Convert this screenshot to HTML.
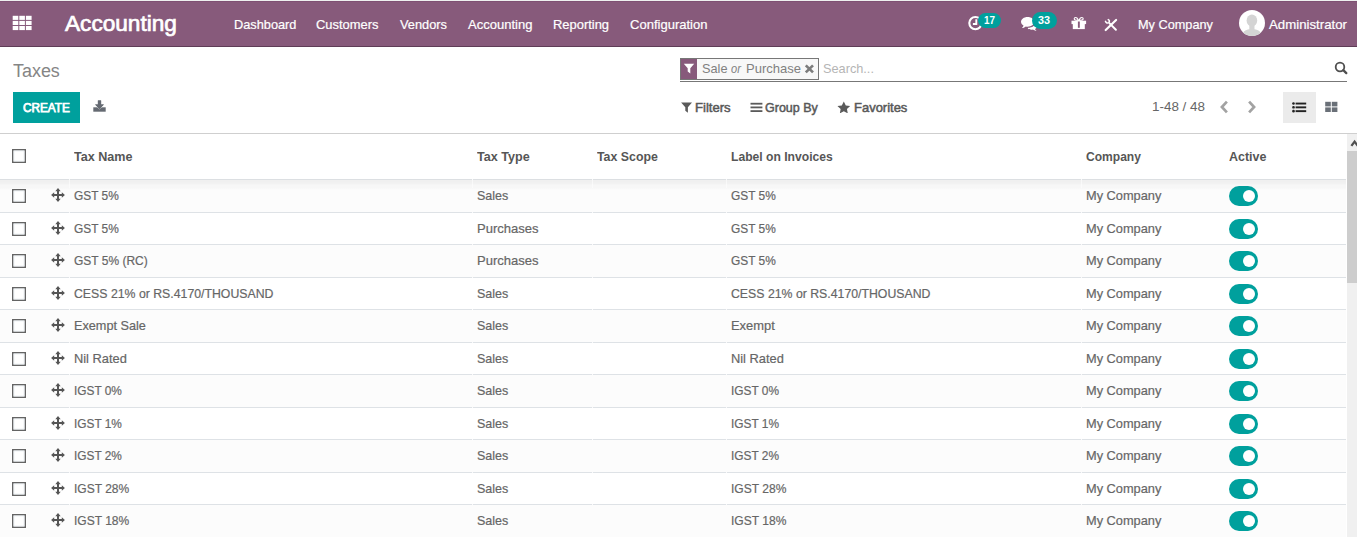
<!DOCTYPE html>
<html lang="en">
<head>
<meta charset="utf-8">
<title>Taxes - Odoo</title>
<style>
html,body{margin:0;padding:0;}
body{width:1357px;height:537px;overflow:hidden;background:#fff;position:relative;
  font-family:"Liberation Sans",sans-serif;font-size:13px;color:#666;}
.abs,.t,.row,.cb,.hd,.tg,svg.ic{position:absolute;}
.t{white-space:nowrap;display:block;transform-origin:0 0;}
/* navbar */
#topline{left:0;top:0;width:1357px;height:1px;background:#eef0ef;}
#nav{left:0;top:1px;width:1357px;height:45px;background:#875a7b;border-bottom:1px solid #5f3d57;}
#nav:before{content:"";position:absolute;left:0;top:0;width:100%;height:1px;background:#7f5073;}
.badge{background:#00a09d;border-radius:10px;}
#avatar{left:1239px;top:10px;width:26px;height:26px;border-radius:50%;background:radial-gradient(circle at 50% 45%,#fff 60%,#f1f1f1 100%);overflow:hidden;}
/* control panel */
#cpline{left:0;top:133px;width:1357px;height:1px;background:#cfcfcf;}
#create{left:13px;top:92px;width:67px;height:31px;background:#00a09d;}
#facet{left:680px;top:58px;width:137px;height:20px;border:1px solid #777;background:#f8f8f8;}
#facet i{position:absolute;left:0;top:0;width:16px;height:20px;background:#875a7b;display:block;}
#sline{left:680px;top:81px;width:667px;height:1px;background:#777;}
#listbtn{left:1283px;top:92px;width:33px;height:31px;background:#ebebeb;}
/* table */
#thead{left:0;top:134px;width:1346px;height:45px;background:#fff;}
#theadline{left:0;top:179px;width:1346px;height:1px;background:#dcdfe2;}
.row{left:0;width:1346px;box-sizing:border-box;border-bottom:1px solid #dee2e6;}
.row.r0{background:#fcfcfc;}
.row.r1{background:#fff;}
#shadow{left:0;top:180px;width:1346px;height:10px;background:linear-gradient(to bottom,rgba(0,0,0,.05) 0,rgba(0,0,0,.04) 4px,rgba(0,0,0,.02) 5px,rgba(0,0,0,.018) 8px,rgba(0,0,0,0) 10px);}
.cb{left:12px;}
.hd{left:51.4px;}
.tg{left:1229px;width:29px;height:20px;border-radius:10px;background:#00a09d;}
.tg i{position:absolute;left:14px;top:4px;width:12px;height:12px;border-radius:50%;background:#fff;}
.seam{width:1px;height:1px;background:rgba(255,255,255,.8);}
/* scrollbar */
#sb{left:1347px;top:134px;width:10px;height:403px;background:#f0f0f0;}
#sbthumb{left:1347px;top:151px;width:10px;height:132px;background:#cdcdcd;}
</style>
</head>
<body>
<div id="topline" class="abs"></div>
<div id="nav" class="abs"></div>

<!-- apps icon -->
<svg class="ic" style="left:12px;top:15px" width="20" height="16" viewBox="0 0 20 16" fill="#fff">
  <rect x="0.7" y="0.8" width="5.6" height="4.1"/><rect x="7.3" y="0.8" width="5.6" height="4.1"/><rect x="13.9" y="0.8" width="5.7" height="4.1"/>
  <rect x="0.7" y="5.9" width="5.6" height="4.1"/><rect x="7.3" y="5.9" width="5.6" height="4.1"/><rect x="13.9" y="5.9" width="5.7" height="4.1"/>
  <rect x="0.7" y="11" width="5.6" height="4.1"/><rect x="7.3" y="11" width="5.6" height="4.1"/><rect x="13.9" y="11" width="5.7" height="4.1"/>
</svg>

<!-- clock icon -->
<svg class="ic" style="left:967px;top:15px" width="17" height="17" viewBox="0 0 17 17" fill="none" stroke="#fff">
  <circle cx="8.4" cy="8.1" r="6.1" stroke-width="2.1"/>
  <path d="M9.3 4.3 V9 H5.9" stroke-width="1.9"/>
</svg>
<div class="abs badge" style="left:978px;top:13px;width:23px;height:15px;"></div>

<!-- comments icon -->
<svg class="ic" style="left:1020px;top:16px" width="20" height="16" viewBox="0 0 20 16" fill="#fff">
  <path d="M7.6 0.9 C11.4 0.9 14.2 3.1 14.2 5.8 C14.2 8.5 11.4 10.7 7.6 10.7 C7 10.7 6.4 10.6 5.8 10.5 C4.9 11.4 3.6 11.9 2 12.1 C2.8 11.4 3.3 10.5 3.5 9.6 C2 8.7 1 7.3 1 5.8 C1 3.1 3.8 0.9 7.6 0.9 Z"/>
  <path d="M15.4 7.2 C16.4 7.9 17 8.9 17 10 C17 11.2 16.2 12.3 15 13 C15.2 13.7 15.7 14.3 16.6 14.9 C15 14.8 13.8 14.3 13 13.6 C12.5 13.7 12 13.8 11.4 13.8 C9.9 13.8 8.6 13.4 7.7 12.6 L8.2 11.7 C12.2 11.6 15.4 9.6 15.4 7.2 Z"/>
</svg>
<div class="abs badge" style="left:1032px;top:12px;width:25px;height:17px;"></div>

<!-- gift icon -->
<svg class="ic" style="left:1071px;top:16px" width="16" height="14" viewBox="0 0 16 14">
  <path d="M4.6 1.5 C5.8 1.5 6.9 2.9 7.4 4.5 C5.8 4.5 3.2 4.3 3.2 2.8 C3.2 2 3.8 1.5 4.6 1.5 Z M10.8 1.5 C9.6 1.5 8.5 2.9 8 4.5 C9.6 4.5 12.2 4.3 12.2 2.8 C12.2 2 11.6 1.5 10.8 1.5 Z" fill="none" stroke="#fff" stroke-width="1.1"/>
  <rect x="0.5" y="4.7" width="14.6" height="3.4" fill="#fff"/>
  <rect x="1.8" y="8" width="12" height="5.1" fill="#fff"/>
  <rect x="6.9" y="5.5" width="1.9" height="6.3" fill="#875a7b"/>
</svg>

<!-- tools icon -->
<svg class="ic" style="left:1104px;top:18px" width="14" height="14" viewBox="0 0 14 14" fill="none" stroke="#fff" stroke-linecap="round">
  <path d="M1.7 12 L12.1 2" stroke-width="2.2"/>
  <path d="M5.6 5.4 L11.9 11.8" stroke-width="2"/>
  <path d="M1.5 3.4 C1.9 4.9 3.6 5.5 4.8 4.5 C5.7 3.6 5.5 2.2 4.3 1.6" stroke-width="1.6"/>
</svg>

<!-- avatar -->
<div id="avatar" class="abs">
  <svg width="26" height="26" viewBox="0 0 26 26" fill="#d4d4d4"><ellipse cx="12.9" cy="10.6" rx="5.3" ry="6"/><path d="M3.2 26 C3.2 21.6 6.4 20 10.3 19.2 L10.3 14 H15.5 L15.5 19.2 C19.4 20 22.6 21.6 22.6 26 Z"/></svg>
</div>

<!-- control panel -->
<div id="create" class="abs"></div>
<!-- download icon -->
<svg class="ic" style="left:93px;top:100px" width="13" height="12" viewBox="0 0 13 12" fill="#656a72">
  <path d="M0.3 7.3 H12.7 V11.7 H0.3 Z"/>
  <path d="M4.9 0.6 H8.1 V4.5 H10.9 L6.5 8.9 L2.1 4.5 H4.9 Z" stroke="#fff" stroke-width="1" paint-order="stroke"/>
  <path d="M4.9 0.6 H8.1 V4.5 H10.9 L6.5 8.9 L2.1 4.5 H4.9 Z"/>
</svg>
<div id="facet" class="abs"><i></i></div>
<!-- facet filter icon -->
<svg class="ic" style="left:683px;top:63px" width="12" height="12" viewBox="0 0 12 12" fill="#fff">
  <path d="M0.8 0.8 H11.2 L7.3 5.3 V10.4 L4.7 8.6 V5.3 Z"/>
</svg>
<!-- facet close -->
<svg class="ic" style="left:804px;top:64px" width="11" height="10" viewBox="0 0 11 10" fill="none" stroke="#7c7c7c" stroke-width="2.7">
  <path d="M1.8 1.4 L9 8.4 M9 1.4 L1.8 8.4"/>
</svg>
<div id="sline" class="abs"></div>
<!-- search icon -->
<svg class="ic" style="left:1334px;top:61px" width="14" height="14" viewBox="0 0 14 14" fill="none" stroke="#4f4f4f" stroke-width="1.8">
  <circle cx="6" cy="6" r="4.3"/>
  <path d="M9.3 9.2 L12.3 12.1" stroke-width="2.3" stroke-linecap="round"/>
</svg>
<!-- filters icon -->
<svg class="ic" style="left:681px;top:102px" width="12" height="11" viewBox="0 0 12 11" fill="#5a5a5a">
  <path d="M0.1 0.6 H11 L6.9 5.2 V10.7 L4.3 8.7 V5.2 Z"/>
</svg>
<!-- group by icon -->
<svg class="ic" style="left:750px;top:102px" width="13" height="11" viewBox="0 0 13 11" fill="#5a5a5a">
  <rect x="0.5" y="0.8" width="11.9" height="1.8"/><rect x="0.5" y="4.5" width="11.9" height="1.8"/><rect x="0.5" y="8.2" width="11.9" height="1.8"/>
</svg>
<!-- star icon -->
<svg class="ic" style="left:837.4px;top:100.6px" width="13.6" height="12.6" viewBox="0 0 13 12" fill="#5a5a5a">
  <path d="M6.5 0.4 L8.4 4.2 L12.6 4.8 L9.5 7.7 L10.3 11.8 L6.5 9.8 L2.7 11.8 L3.5 7.7 L0.4 4.8 L4.6 4.2 Z"/>
</svg>
<!-- pager chevrons -->
<svg class="ic" style="left:1219px;top:100px" width="11" height="14" viewBox="0 0 11 14" fill="none" stroke="#a2a2a2" stroke-width="2.7">
  <path d="M7.9 1.6 L2.9 7 L7.9 12.4"/>
</svg>
<svg class="ic" style="left:1246px;top:100px" width="11" height="14" viewBox="0 0 11 14" fill="none" stroke="#a2a2a2" stroke-width="2.7">
  <path d="M3.1 1.6 L8.1 7 L3.1 12.4"/>
</svg>
<div id="listbtn" class="abs"></div>
<!-- list icon -->
<svg class="ic" style="left:1292px;top:102px" width="15" height="11" viewBox="0 0 15 11" fill="#222">
  <rect x="0.2" y="0.2" width="2.6" height="2.6" rx="1.2"/><rect x="0.2" y="4" width="2.6" height="2.6" rx="1.2"/><rect x="0.2" y="7.8" width="2.6" height="2.6" rx="1.2"/>
  <rect x="3.6" y="0.6" width="10.6" height="1.9"/><rect x="3.6" y="4.4" width="10.6" height="1.9"/><rect x="3.6" y="8.2" width="10.6" height="1.9"/>
</svg>
<!-- kanban icon -->
<svg class="ic" style="left:1325px;top:101px" width="13" height="12" viewBox="0 0 13 12" fill="#6a7078">
  <rect x="0.2" y="0.8" width="5.6" height="4.6"/><rect x="6.8" y="0.8" width="5.6" height="4.6"/>
  <rect x="0.2" y="6.4" width="5.6" height="4.6"/><rect x="6.8" y="6.4" width="5.6" height="4.6"/>
</svg>
<div id="cpline" class="abs"></div>

<!-- table -->
<div id="thead" class="abs"></div>
<div id="theadline" class="abs"></div>
<div class="row r0" style="top:180px;height:33px"></div>
<svg class="cb" style="top:189px" width="14" height="14" viewBox="0 0 14 14" overflow="visible"><rect x="-0.5" y="-0.5" width="15" height="15" fill="#fff"/><rect x="0.75" y="0.75" width="12.5" height="12.5" fill="#fff" stroke="#646464" stroke-width="1.5"/><rect x="1.9" y="1.9" width="10.2" height="10.2" fill="none" stroke="#e4e9ee" stroke-width="0.8"/></svg>
<svg class="hd" style="top:188.1px" width="14" height="14" viewBox="0 0 14 14"><g fill="#555"><rect x="2.6" y="6" width="8.8" height="2"/><rect x="6" y="2.6" width="2" height="8.8"/><path d="M7 0.1 L9.7 3.2 H4.3 Z M7 13.9 L9.7 10.8 H4.3 Z M0.1 7 L3.2 4.3 V9.7 Z M13.9 7 L10.8 4.3 V9.7 Z"/></g></svg>
<div class="tg" style="top:186px"><i></i></div>
<div class="row r1" style="top:213px;height:32px"></div>
<svg class="cb" style="top:222px" width="14" height="14" viewBox="0 0 14 14" overflow="visible"><rect x="-0.5" y="-0.5" width="15" height="15" fill="#fff"/><rect x="0.75" y="0.75" width="12.5" height="12.5" fill="#fff" stroke="#646464" stroke-width="1.5"/><rect x="1.9" y="1.9" width="10.2" height="10.2" fill="none" stroke="#e4e9ee" stroke-width="0.8"/></svg>
<svg class="hd" style="top:221.1px" width="14" height="14" viewBox="0 0 14 14"><g fill="#555"><rect x="2.6" y="6" width="8.8" height="2"/><rect x="6" y="2.6" width="2" height="8.8"/><path d="M7 0.1 L9.7 3.2 H4.3 Z M7 13.9 L9.7 10.8 H4.3 Z M0.1 7 L3.2 4.3 V9.7 Z M13.9 7 L10.8 4.3 V9.7 Z"/></g></svg>
<div class="tg" style="top:219px"><i></i></div>
<div class="row r0" style="top:245px;height:33px"></div>
<svg class="cb" style="top:254px" width="14" height="14" viewBox="0 0 14 14" overflow="visible"><rect x="-0.5" y="-0.5" width="15" height="15" fill="#fff"/><rect x="0.75" y="0.75" width="12.5" height="12.5" fill="#fff" stroke="#646464" stroke-width="1.5"/><rect x="1.9" y="1.9" width="10.2" height="10.2" fill="none" stroke="#e4e9ee" stroke-width="0.8"/></svg>
<svg class="hd" style="top:253.1px" width="14" height="14" viewBox="0 0 14 14"><g fill="#555"><rect x="2.6" y="6" width="8.8" height="2"/><rect x="6" y="2.6" width="2" height="8.8"/><path d="M7 0.1 L9.7 3.2 H4.3 Z M7 13.9 L9.7 10.8 H4.3 Z M0.1 7 L3.2 4.3 V9.7 Z M13.9 7 L10.8 4.3 V9.7 Z"/></g></svg>
<div class="tg" style="top:251px"><i></i></div>
<div class="row r1" style="top:278px;height:32px"></div>
<svg class="cb" style="top:287px" width="14" height="14" viewBox="0 0 14 14" overflow="visible"><rect x="-0.5" y="-0.5" width="15" height="15" fill="#fff"/><rect x="0.75" y="0.75" width="12.5" height="12.5" fill="#fff" stroke="#646464" stroke-width="1.5"/><rect x="1.9" y="1.9" width="10.2" height="10.2" fill="none" stroke="#e4e9ee" stroke-width="0.8"/></svg>
<svg class="hd" style="top:286.1px" width="14" height="14" viewBox="0 0 14 14"><g fill="#555"><rect x="2.6" y="6" width="8.8" height="2"/><rect x="6" y="2.6" width="2" height="8.8"/><path d="M7 0.1 L9.7 3.2 H4.3 Z M7 13.9 L9.7 10.8 H4.3 Z M0.1 7 L3.2 4.3 V9.7 Z M13.9 7 L10.8 4.3 V9.7 Z"/></g></svg>
<div class="tg" style="top:284px"><i></i></div>
<div class="row r0" style="top:310px;height:33px"></div>
<svg class="cb" style="top:319px" width="14" height="14" viewBox="0 0 14 14" overflow="visible"><rect x="-0.5" y="-0.5" width="15" height="15" fill="#fff"/><rect x="0.75" y="0.75" width="12.5" height="12.5" fill="#fff" stroke="#646464" stroke-width="1.5"/><rect x="1.9" y="1.9" width="10.2" height="10.2" fill="none" stroke="#e4e9ee" stroke-width="0.8"/></svg>
<svg class="hd" style="top:318.1px" width="14" height="14" viewBox="0 0 14 14"><g fill="#555"><rect x="2.6" y="6" width="8.8" height="2"/><rect x="6" y="2.6" width="2" height="8.8"/><path d="M7 0.1 L9.7 3.2 H4.3 Z M7 13.9 L9.7 10.8 H4.3 Z M0.1 7 L3.2 4.3 V9.7 Z M13.9 7 L10.8 4.3 V9.7 Z"/></g></svg>
<div class="tg" style="top:316px"><i></i></div>
<div class="row r1" style="top:343px;height:32px"></div>
<svg class="cb" style="top:352px" width="14" height="14" viewBox="0 0 14 14" overflow="visible"><rect x="-0.5" y="-0.5" width="15" height="15" fill="#fff"/><rect x="0.75" y="0.75" width="12.5" height="12.5" fill="#fff" stroke="#646464" stroke-width="1.5"/><rect x="1.9" y="1.9" width="10.2" height="10.2" fill="none" stroke="#e4e9ee" stroke-width="0.8"/></svg>
<svg class="hd" style="top:351.1px" width="14" height="14" viewBox="0 0 14 14"><g fill="#555"><rect x="2.6" y="6" width="8.8" height="2"/><rect x="6" y="2.6" width="2" height="8.8"/><path d="M7 0.1 L9.7 3.2 H4.3 Z M7 13.9 L9.7 10.8 H4.3 Z M0.1 7 L3.2 4.3 V9.7 Z M13.9 7 L10.8 4.3 V9.7 Z"/></g></svg>
<div class="tg" style="top:349px"><i></i></div>
<div class="row r0" style="top:375px;height:33px"></div>
<svg class="cb" style="top:384px" width="14" height="14" viewBox="0 0 14 14" overflow="visible"><rect x="-0.5" y="-0.5" width="15" height="15" fill="#fff"/><rect x="0.75" y="0.75" width="12.5" height="12.5" fill="#fff" stroke="#646464" stroke-width="1.5"/><rect x="1.9" y="1.9" width="10.2" height="10.2" fill="none" stroke="#e4e9ee" stroke-width="0.8"/></svg>
<svg class="hd" style="top:383.1px" width="14" height="14" viewBox="0 0 14 14"><g fill="#555"><rect x="2.6" y="6" width="8.8" height="2"/><rect x="6" y="2.6" width="2" height="8.8"/><path d="M7 0.1 L9.7 3.2 H4.3 Z M7 13.9 L9.7 10.8 H4.3 Z M0.1 7 L3.2 4.3 V9.7 Z M13.9 7 L10.8 4.3 V9.7 Z"/></g></svg>
<div class="tg" style="top:381px"><i></i></div>
<div class="row r1" style="top:408px;height:32px"></div>
<svg class="cb" style="top:417px" width="14" height="14" viewBox="0 0 14 14" overflow="visible"><rect x="-0.5" y="-0.5" width="15" height="15" fill="#fff"/><rect x="0.75" y="0.75" width="12.5" height="12.5" fill="#fff" stroke="#646464" stroke-width="1.5"/><rect x="1.9" y="1.9" width="10.2" height="10.2" fill="none" stroke="#e4e9ee" stroke-width="0.8"/></svg>
<svg class="hd" style="top:416.1px" width="14" height="14" viewBox="0 0 14 14"><g fill="#555"><rect x="2.6" y="6" width="8.8" height="2"/><rect x="6" y="2.6" width="2" height="8.8"/><path d="M7 0.1 L9.7 3.2 H4.3 Z M7 13.9 L9.7 10.8 H4.3 Z M0.1 7 L3.2 4.3 V9.7 Z M13.9 7 L10.8 4.3 V9.7 Z"/></g></svg>
<div class="tg" style="top:414px"><i></i></div>
<div class="row r0" style="top:440px;height:33px"></div>
<svg class="cb" style="top:449px" width="14" height="14" viewBox="0 0 14 14" overflow="visible"><rect x="-0.5" y="-0.5" width="15" height="15" fill="#fff"/><rect x="0.75" y="0.75" width="12.5" height="12.5" fill="#fff" stroke="#646464" stroke-width="1.5"/><rect x="1.9" y="1.9" width="10.2" height="10.2" fill="none" stroke="#e4e9ee" stroke-width="0.8"/></svg>
<svg class="hd" style="top:448.1px" width="14" height="14" viewBox="0 0 14 14"><g fill="#555"><rect x="2.6" y="6" width="8.8" height="2"/><rect x="6" y="2.6" width="2" height="8.8"/><path d="M7 0.1 L9.7 3.2 H4.3 Z M7 13.9 L9.7 10.8 H4.3 Z M0.1 7 L3.2 4.3 V9.7 Z M13.9 7 L10.8 4.3 V9.7 Z"/></g></svg>
<div class="tg" style="top:446px"><i></i></div>
<div class="row r1" style="top:473px;height:32px"></div>
<svg class="cb" style="top:482px" width="14" height="14" viewBox="0 0 14 14" overflow="visible"><rect x="-0.5" y="-0.5" width="15" height="15" fill="#fff"/><rect x="0.75" y="0.75" width="12.5" height="12.5" fill="#fff" stroke="#646464" stroke-width="1.5"/><rect x="1.9" y="1.9" width="10.2" height="10.2" fill="none" stroke="#e4e9ee" stroke-width="0.8"/></svg>
<svg class="hd" style="top:481.1px" width="14" height="14" viewBox="0 0 14 14"><g fill="#555"><rect x="2.6" y="6" width="8.8" height="2"/><rect x="6" y="2.6" width="2" height="8.8"/><path d="M7 0.1 L9.7 3.2 H4.3 Z M7 13.9 L9.7 10.8 H4.3 Z M0.1 7 L3.2 4.3 V9.7 Z M13.9 7 L10.8 4.3 V9.7 Z"/></g></svg>
<div class="tg" style="top:479px"><i></i></div>
<div class="row r0" style="top:505px;height:33px"></div>
<svg class="cb" style="top:514px" width="14" height="14" viewBox="0 0 14 14" overflow="visible"><rect x="-0.5" y="-0.5" width="15" height="15" fill="#fff"/><rect x="0.75" y="0.75" width="12.5" height="12.5" fill="#fff" stroke="#646464" stroke-width="1.5"/><rect x="1.9" y="1.9" width="10.2" height="10.2" fill="none" stroke="#e4e9ee" stroke-width="0.8"/></svg>
<svg class="hd" style="top:513.1px" width="14" height="14" viewBox="0 0 14 14"><g fill="#555"><rect x="2.6" y="6" width="8.8" height="2"/><rect x="6" y="2.6" width="2" height="8.8"/><path d="M7 0.1 L9.7 3.2 H4.3 Z M7 13.9 L9.7 10.8 H4.3 Z M0.1 7 L3.2 4.3 V9.7 Z M13.9 7 L10.8 4.3 V9.7 Z"/></g></svg>
<div class="tg" style="top:511px"><i></i></div>
<div id="shadow" class="abs"></div>
<svg class="cb" style="top:149px" width="14" height="14" viewBox="0 0 14 14" overflow="visible"><rect x="-0.5" y="-0.5" width="15" height="15" fill="#fff"/><rect x="0.75" y="0.75" width="12.5" height="12.5" fill="#fff" stroke="#646464" stroke-width="1.5"/><rect x="1.9" y="1.9" width="10.2" height="10.2" fill="none" stroke="#e4e9ee" stroke-width="0.8"/></svg>

<div class="abs seam" style="left:69px;top:180px;height:8px;background:rgba(255,255,255,.55)"></div>
<div class="abs seam" style="left:69px;top:179px"></div>
<div class="abs seam" style="left:69px;top:212px"></div>
<div class="abs seam" style="left:69px;top:244px"></div>
<div class="abs seam" style="left:69px;top:277px"></div>
<div class="abs seam" style="left:69px;top:309px"></div>
<div class="abs seam" style="left:69px;top:342px"></div>
<div class="abs seam" style="left:69px;top:374px"></div>
<div class="abs seam" style="left:69px;top:407px"></div>
<div class="abs seam" style="left:69px;top:439px"></div>
<div class="abs seam" style="left:69px;top:472px"></div>
<div class="abs seam" style="left:69px;top:504px"></div>
<div class="abs seam" style="left:472px;top:180px;height:8px;background:rgba(255,255,255,.55)"></div>
<div class="abs seam" style="left:472px;top:179px"></div>
<div class="abs seam" style="left:472px;top:212px"></div>
<div class="abs seam" style="left:472px;top:244px"></div>
<div class="abs seam" style="left:472px;top:277px"></div>
<div class="abs seam" style="left:472px;top:309px"></div>
<div class="abs seam" style="left:472px;top:342px"></div>
<div class="abs seam" style="left:472px;top:374px"></div>
<div class="abs seam" style="left:472px;top:407px"></div>
<div class="abs seam" style="left:472px;top:439px"></div>
<div class="abs seam" style="left:472px;top:472px"></div>
<div class="abs seam" style="left:472px;top:504px"></div>
<div class="abs seam" style="left:592px;top:180px;height:8px;background:rgba(255,255,255,.55)"></div>
<div class="abs seam" style="left:592px;top:179px"></div>
<div class="abs seam" style="left:592px;top:212px"></div>
<div class="abs seam" style="left:592px;top:244px"></div>
<div class="abs seam" style="left:592px;top:277px"></div>
<div class="abs seam" style="left:592px;top:309px"></div>
<div class="abs seam" style="left:592px;top:342px"></div>
<div class="abs seam" style="left:592px;top:374px"></div>
<div class="abs seam" style="left:592px;top:407px"></div>
<div class="abs seam" style="left:592px;top:439px"></div>
<div class="abs seam" style="left:592px;top:472px"></div>
<div class="abs seam" style="left:592px;top:504px"></div>
<div class="abs seam" style="left:726px;top:180px;height:8px;background:rgba(255,255,255,.55)"></div>
<div class="abs seam" style="left:726px;top:179px"></div>
<div class="abs seam" style="left:726px;top:212px"></div>
<div class="abs seam" style="left:726px;top:244px"></div>
<div class="abs seam" style="left:726px;top:277px"></div>
<div class="abs seam" style="left:726px;top:309px"></div>
<div class="abs seam" style="left:726px;top:342px"></div>
<div class="abs seam" style="left:726px;top:374px"></div>
<div class="abs seam" style="left:726px;top:407px"></div>
<div class="abs seam" style="left:726px;top:439px"></div>
<div class="abs seam" style="left:726px;top:472px"></div>
<div class="abs seam" style="left:726px;top:504px"></div>
<div class="abs seam" style="left:1081px;top:180px;height:8px;background:rgba(255,255,255,.55)"></div>
<div class="abs seam" style="left:1081px;top:179px"></div>
<div class="abs seam" style="left:1081px;top:212px"></div>
<div class="abs seam" style="left:1081px;top:244px"></div>
<div class="abs seam" style="left:1081px;top:277px"></div>
<div class="abs seam" style="left:1081px;top:309px"></div>
<div class="abs seam" style="left:1081px;top:342px"></div>
<div class="abs seam" style="left:1081px;top:374px"></div>
<div class="abs seam" style="left:1081px;top:407px"></div>
<div class="abs seam" style="left:1081px;top:439px"></div>
<div class="abs seam" style="left:1081px;top:472px"></div>
<div class="abs seam" style="left:1081px;top:504px"></div>
<!-- scrollbar -->
<div id="sb" class="abs"></div>
<div id="sbthumb" class="abs"></div>
<svg class="ic" style="left:1347px;top:138px" width="10" height="10" viewBox="0 0 10 10" fill="none" stroke="#505050" stroke-width="2.3">
  <path d="M4.4 7.9 L7.6 3.6 L10.8 7.9" stroke-linejoin="miter"/>
</svg>

<span class="t" style="left:65.00px;top:11px;font-size:22px;line-height:25px;transform:scaleX(1.0279);color:#fff;-webkit-text-stroke:0.7px #fff;">Accounting</span>
<span class="t" style="left:233.52px;top:17px;font-size:13px;line-height:15px;transform:scaleX(0.9817);color:#fff;-webkit-text-stroke:0.2px #fff;">Dashboard</span>
<span class="t" style="left:316.44px;top:17px;font-size:13px;line-height:15px;transform:scaleX(0.9941);color:#fff;-webkit-text-stroke:0.2px #fff;">Customers</span>
<span class="t" style="left:400.04px;top:17px;font-size:13px;line-height:15px;transform:scaleX(0.9851);color:#fff;-webkit-text-stroke:0.2px #fff;">Vendors</span>
<span class="t" style="left:468.30px;top:17px;font-size:13px;line-height:15px;transform:scaleX(1.0016);color:#fff;-webkit-text-stroke:0.2px #fff;">Accounting</span>
<span class="t" style="left:553.21px;top:17px;font-size:13px;line-height:15px;transform:scaleX(0.9945);color:#fff;-webkit-text-stroke:0.2px #fff;">Reporting</span>
<span class="t" style="left:629.73px;top:17px;font-size:13px;line-height:15px;transform:scaleX(1.0022);color:#fff;-webkit-text-stroke:0.2px #fff;">Configuration</span>
<span class="t" style="left:1137.72px;top:17px;font-size:13px;line-height:15px;transform:scaleX(0.9788);color:#fff;-webkit-text-stroke:0.2px #fff;">My Company</span>
<span class="t" style="left:1268.90px;top:17px;font-size:13px;line-height:15px;transform:scaleX(1.0179);color:#fff;-webkit-text-stroke:0.2px #fff;">Administrator</span>
<span class="t" style="left:984.04px;top:15px;font-size:10px;line-height:11px;transform:scaleX(0.9900);color:#fff;font-weight:700;">17</span>
<span class="t" style="left:1038.44px;top:15px;font-size:10px;line-height:11px;transform:scaleX(1.0839);color:#fff;font-weight:700;">33</span>
<span class="t" style="left:13.37px;top:61px;font-size:18px;line-height:20px;transform:scaleX(0.9957);color:#858585;">Taxes</span>
<span class="t" style="left:23.15px;top:101px;font-size:12px;line-height:14px;transform:scaleX(0.9814);color:#fff;-webkit-text-stroke:0.75px #fff;">CREATE</span>
<span class="t" style="left:701.55px;top:61px;font-size:13px;line-height:15px;transform:scaleX(0.9785);color:#808080;">Sale</span>
<span class="t" style="left:731.47px;top:61px;font-size:13px;line-height:15px;transform:scaleX(0.8522);color:#808080;font-style:italic;">or</span>
<span class="t" style="left:745.80px;top:61px;font-size:13px;line-height:15px;transform:scaleX(1.0013);color:#808080;">Purchase</span>
<span class="t" style="left:822.75px;top:61px;font-size:13px;line-height:15px;transform:scaleX(0.9787);color:#b5b5b5;">Search...</span>
<span class="t" style="left:695.39px;top:100px;font-size:13px;line-height:15px;transform:scaleX(1.0079);color:#585858;-webkit-text-stroke:0.5px #585858;">Filters</span>
<span class="t" style="left:765.36px;top:100px;font-size:13px;line-height:15px;transform:scaleX(0.9618);color:#585858;-webkit-text-stroke:0.5px #585858;">Group By</span>
<span class="t" style="left:853.90px;top:100px;font-size:13px;line-height:15px;transform:scaleX(0.9981);color:#585858;-webkit-text-stroke:0.5px #585858;">Favorites</span>
<span class="t" style="left:1151.77px;top:99px;font-size:13px;line-height:15px;transform:scaleX(1.0329);color:#666;">1-48 / 48</span>
<span class="t" style="left:74.24px;top:149px;font-size:13px;line-height:15px;transform:scaleX(0.9677);color:#565656;font-weight:700;">Tax Name</span>
<span class="t" style="left:476.94px;top:149px;font-size:13px;line-height:15px;transform:scaleX(0.9678);color:#565656;font-weight:700;">Tax Type</span>
<span class="t" style="left:596.94px;top:149px;font-size:13px;line-height:15px;transform:scaleX(0.9496);color:#565656;font-weight:700;">Tax Scope</span>
<span class="t" style="left:731.32px;top:149px;font-size:13px;line-height:15px;transform:scaleX(0.9325);color:#565656;font-weight:700;">Label on Invoices</span>
<span class="t" style="left:1085.94px;top:149px;font-size:13px;line-height:15px;transform:scaleX(0.9273);color:#565656;font-weight:700;">Company</span>
<span class="t" style="left:1228.88px;top:149px;font-size:13px;line-height:15px;transform:scaleX(0.9590);color:#565656;font-weight:700;">Active</span>
<span class="t" style="left:73.59px;top:188px;font-size:13px;line-height:15px;transform:scaleX(0.9157);color:#666;-webkit-text-stroke:0.2px #666;">GST 5%</span>
<span class="t" style="left:477.06px;top:188px;font-size:13px;line-height:15px;transform:scaleX(0.9606);color:#666;-webkit-text-stroke:0.2px #666;">Sales</span>
<span class="t" style="left:730.59px;top:188px;font-size:13px;line-height:15px;transform:scaleX(0.9157);color:#666;-webkit-text-stroke:0.2px #666;">GST 5%</span>
<span class="t" style="left:1086.22px;top:188px;font-size:13px;line-height:15px;transform:scaleX(0.9841);color:#666;-webkit-text-stroke:0.2px #666;">My Company</span>
<span class="t" style="left:73.59px;top:221px;font-size:13px;line-height:15px;transform:scaleX(0.9157);color:#666;-webkit-text-stroke:0.2px #666;">GST 5%</span>
<span class="t" style="left:476.90px;top:221px;font-size:13px;line-height:15px;transform:scaleX(1.0017);color:#666;-webkit-text-stroke:0.2px #666;">Purchases</span>
<span class="t" style="left:730.59px;top:221px;font-size:13px;line-height:15px;transform:scaleX(0.9157);color:#666;-webkit-text-stroke:0.2px #666;">GST 5%</span>
<span class="t" style="left:1086.22px;top:221px;font-size:13px;line-height:15px;transform:scaleX(0.9841);color:#666;-webkit-text-stroke:0.2px #666;">My Company</span>
<span class="t" style="left:73.59px;top:253px;font-size:13px;line-height:15px;transform:scaleX(0.9223);color:#666;-webkit-text-stroke:0.2px #666;">GST 5% (RC)</span>
<span class="t" style="left:476.90px;top:253px;font-size:13px;line-height:15px;transform:scaleX(1.0017);color:#666;-webkit-text-stroke:0.2px #666;">Purchases</span>
<span class="t" style="left:730.59px;top:253px;font-size:13px;line-height:15px;transform:scaleX(0.9157);color:#666;-webkit-text-stroke:0.2px #666;">GST 5%</span>
<span class="t" style="left:1086.22px;top:253px;font-size:13px;line-height:15px;transform:scaleX(0.9841);color:#666;-webkit-text-stroke:0.2px #666;">My Company</span>
<span class="t" style="left:73.57px;top:286px;font-size:13px;line-height:15px;transform:scaleX(0.9453);color:#666;-webkit-text-stroke:0.2px #666;">CESS 21% or RS.4170/THOUSAND</span>
<span class="t" style="left:477.06px;top:286px;font-size:13px;line-height:15px;transform:scaleX(0.9606);color:#666;-webkit-text-stroke:0.2px #666;">Sales</span>
<span class="t" style="left:730.57px;top:286px;font-size:13px;line-height:15px;transform:scaleX(0.9453);color:#666;-webkit-text-stroke:0.2px #666;">CESS 21% or RS.4170/THOUSAND</span>
<span class="t" style="left:1086.22px;top:286px;font-size:13px;line-height:15px;transform:scaleX(0.9841);color:#666;-webkit-text-stroke:0.2px #666;">My Company</span>
<span class="t" style="left:74.02px;top:318px;font-size:13px;line-height:15px;transform:scaleX(0.9755);color:#666;-webkit-text-stroke:0.2px #666;">Exempt Sale</span>
<span class="t" style="left:477.06px;top:318px;font-size:13px;line-height:15px;transform:scaleX(0.9606);color:#666;-webkit-text-stroke:0.2px #666;">Sales</span>
<span class="t" style="left:731.01px;top:318px;font-size:13px;line-height:15px;transform:scaleX(0.9930);color:#666;-webkit-text-stroke:0.2px #666;">Exempt</span>
<span class="t" style="left:1086.22px;top:318px;font-size:13px;line-height:15px;transform:scaleX(0.9841);color:#666;-webkit-text-stroke:0.2px #666;">My Company</span>
<span class="t" style="left:74.01px;top:351px;font-size:13px;line-height:15px;transform:scaleX(0.9871);color:#666;-webkit-text-stroke:0.2px #666;">Nil Rated</span>
<span class="t" style="left:477.06px;top:351px;font-size:13px;line-height:15px;transform:scaleX(0.9606);color:#666;-webkit-text-stroke:0.2px #666;">Sales</span>
<span class="t" style="left:731.01px;top:351px;font-size:13px;line-height:15px;transform:scaleX(0.9871);color:#666;-webkit-text-stroke:0.2px #666;">Nil Rated</span>
<span class="t" style="left:1086.22px;top:351px;font-size:13px;line-height:15px;transform:scaleX(0.9841);color:#666;-webkit-text-stroke:0.2px #666;">My Company</span>
<span class="t" style="left:74.14px;top:383px;font-size:13px;line-height:15px;transform:scaleX(0.9128);color:#666;-webkit-text-stroke:0.2px #666;">IGST 0%</span>
<span class="t" style="left:477.06px;top:383px;font-size:13px;line-height:15px;transform:scaleX(0.9606);color:#666;-webkit-text-stroke:0.2px #666;">Sales</span>
<span class="t" style="left:731.03px;top:383px;font-size:13px;line-height:15px;transform:scaleX(0.9148);color:#666;-webkit-text-stroke:0.2px #666;">IGST 0%</span>
<span class="t" style="left:1086.22px;top:383px;font-size:13px;line-height:15px;transform:scaleX(0.9841);color:#666;-webkit-text-stroke:0.2px #666;">My Company</span>
<span class="t" style="left:74.14px;top:416px;font-size:13px;line-height:15px;transform:scaleX(0.9128);color:#666;-webkit-text-stroke:0.2px #666;">IGST 1%</span>
<span class="t" style="left:477.06px;top:416px;font-size:13px;line-height:15px;transform:scaleX(0.9606);color:#666;-webkit-text-stroke:0.2px #666;">Sales</span>
<span class="t" style="left:731.03px;top:416px;font-size:13px;line-height:15px;transform:scaleX(0.9148);color:#666;-webkit-text-stroke:0.2px #666;">IGST 1%</span>
<span class="t" style="left:1086.22px;top:416px;font-size:13px;line-height:15px;transform:scaleX(0.9841);color:#666;-webkit-text-stroke:0.2px #666;">My Company</span>
<span class="t" style="left:74.14px;top:448px;font-size:13px;line-height:15px;transform:scaleX(0.9128);color:#666;-webkit-text-stroke:0.2px #666;">IGST 2%</span>
<span class="t" style="left:477.06px;top:448px;font-size:13px;line-height:15px;transform:scaleX(0.9606);color:#666;-webkit-text-stroke:0.2px #666;">Sales</span>
<span class="t" style="left:731.03px;top:448px;font-size:13px;line-height:15px;transform:scaleX(0.9148);color:#666;-webkit-text-stroke:0.2px #666;">IGST 2%</span>
<span class="t" style="left:1086.22px;top:448px;font-size:13px;line-height:15px;transform:scaleX(0.9841);color:#666;-webkit-text-stroke:0.2px #666;">My Company</span>
<span class="t" style="left:74.12px;top:481px;font-size:13px;line-height:15px;transform:scaleX(0.9249);color:#666;-webkit-text-stroke:0.2px #666;">IGST 28%</span>
<span class="t" style="left:477.06px;top:481px;font-size:13px;line-height:15px;transform:scaleX(0.9606);color:#666;-webkit-text-stroke:0.2px #666;">Sales</span>
<span class="t" style="left:731.02px;top:481px;font-size:13px;line-height:15px;transform:scaleX(0.9266);color:#666;-webkit-text-stroke:0.2px #666;">IGST 28%</span>
<span class="t" style="left:1086.22px;top:481px;font-size:13px;line-height:15px;transform:scaleX(0.9841);color:#666;-webkit-text-stroke:0.2px #666;">My Company</span>
<span class="t" style="left:74.12px;top:513px;font-size:13px;line-height:15px;transform:scaleX(0.9249);color:#666;-webkit-text-stroke:0.2px #666;">IGST 18%</span>
<span class="t" style="left:477.06px;top:513px;font-size:13px;line-height:15px;transform:scaleX(0.9606);color:#666;-webkit-text-stroke:0.2px #666;">Sales</span>
<span class="t" style="left:731.02px;top:513px;font-size:13px;line-height:15px;transform:scaleX(0.9266);color:#666;-webkit-text-stroke:0.2px #666;">IGST 18%</span>
<span class="t" style="left:1086.22px;top:513px;font-size:13px;line-height:15px;transform:scaleX(0.9841);color:#666;-webkit-text-stroke:0.2px #666;">My Company</span>
</body>
</html>
